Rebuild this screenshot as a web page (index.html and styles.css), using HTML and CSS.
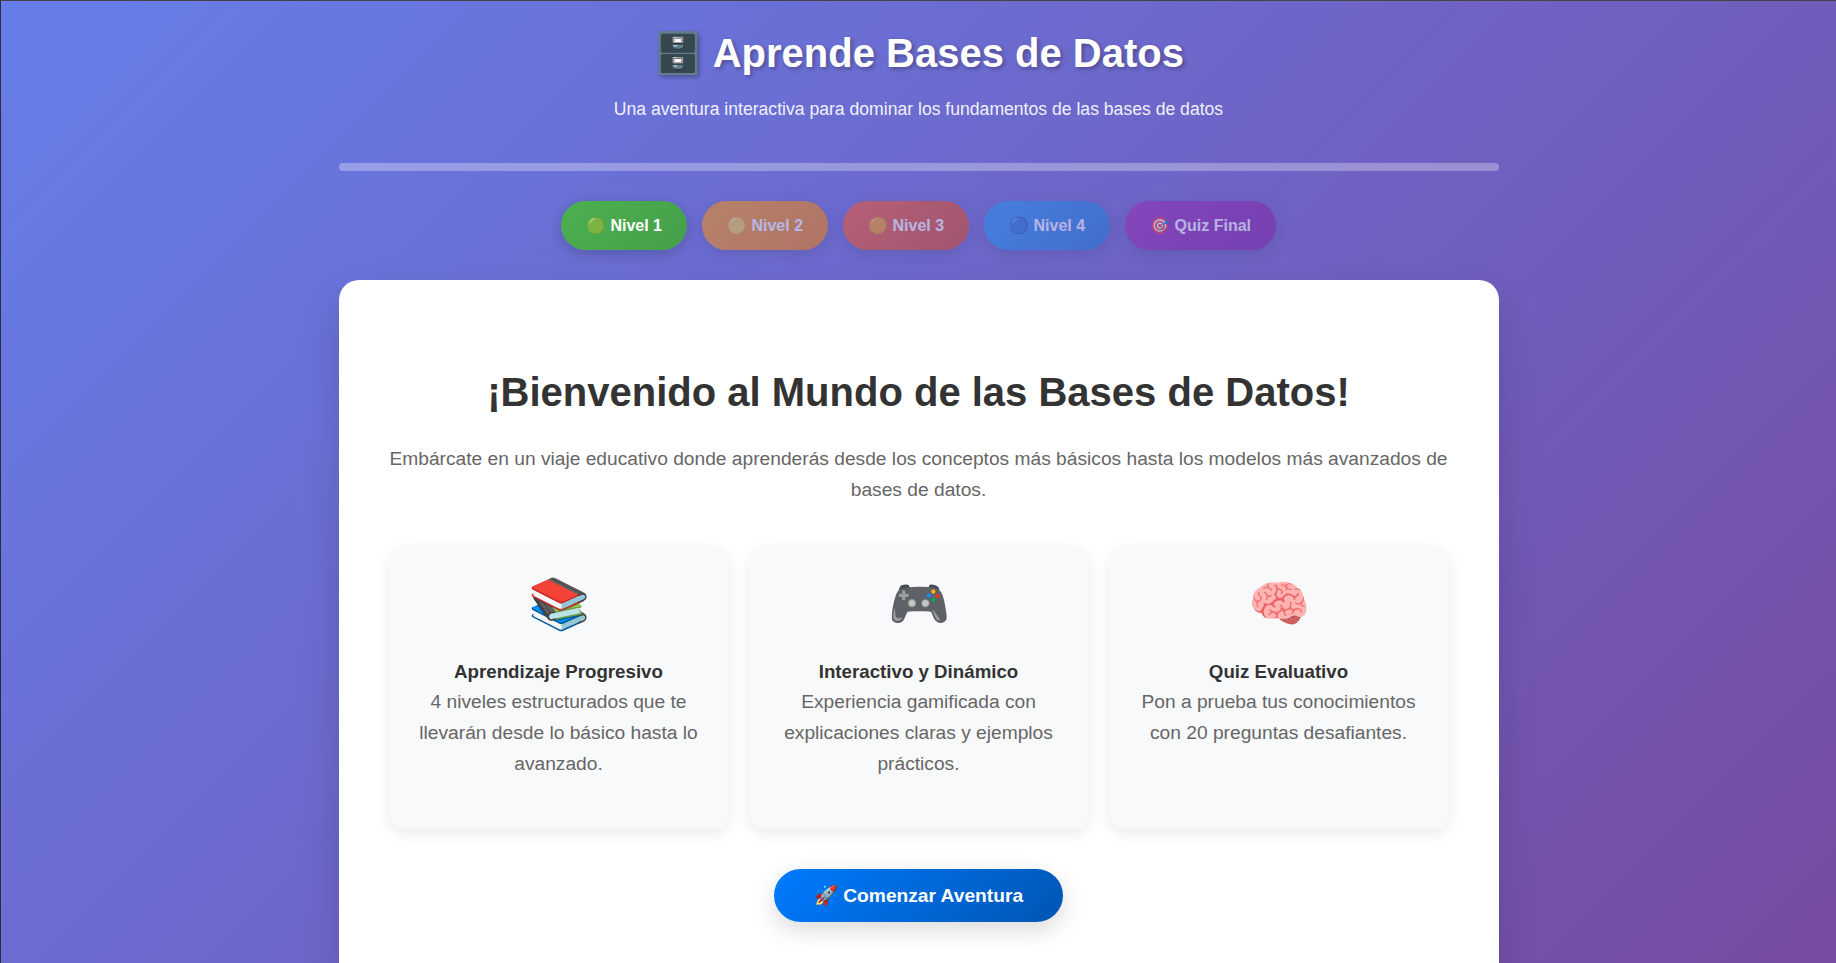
FILE: index.html
```html
<!DOCTYPE html>
<html lang="es">
<head>
<meta charset="utf-8">
<title>Aprende Bases de Datos</title>
<link rel="stylesheet" href="styles.css">
</head>
<body>
<div class="container">
  <header class="header">
    <h1>🗄️ Aprende Bases de Datos</h1>
    <p>Una aventura interactiva para dominar los fundamentos de las bases de datos</p>
  </header>
  <div class="progress"></div>
  <nav class="levels">
    <button class="level level-1 active">🟢 Nivel 1</button>
    <button class="level level-2">🟡 Nivel 2</button>
    <button class="level level-3">🟠 Nivel 3</button>
    <button class="level level-4">🔵 Nivel 4</button>
    <button class="level level-5">🎯 Quiz Final</button>
  </nav>
  <main class="panel">
    <h2>¡Bienvenido al Mundo de las Bases de Datos!</h2>
    <p class="intro">Embárcate en un viaje educativo donde aprenderás desde los conceptos más básicos hasta los modelos más avanzados de bases de datos.</p>
    <section class="features">
      <article class="feature">
        <div class="feature-icon">📚</div>
        <strong>Aprendizaje Progresivo</strong><br>4 niveles estructurados que te llevarán desde lo básico hasta lo avanzado.
      </article>
      <article class="feature">
        <div class="feature-icon">🎮</div>
        <strong>Interactivo y Dinámico</strong><br>Experiencia gamificada con explicaciones claras y ejemplos prácticos.
      </article>
      <article class="feature">
        <div class="feature-icon">🧠</div>
        <strong>Quiz Evaluativo</strong><br>Pon a prueba tus conocimientos con 20 preguntas desafiantes.
      </article>
    </section>
    <div class="cta-row"><button class="cta">🚀 Comenzar Aventura</button></div>
  </main>
</div>
</body>
</html>
```
FILE: styles.css
```css
* { margin: 0; padding: 0; box-sizing: border-box; }
html { height: 100%; }
body {
  font-family: "Liberation Sans", Arial, sans-serif;
  line-height: 1.6;
  color: #333;
  background: linear-gradient(135deg, #667eea 0%, #764ba2 100%);
  border-top: 1px solid #444;
  border-left: 1px solid #2c2c3c;
  overflow: hidden;
  height: 963px;
}
.container { max-width: 1200px; margin: 0 auto; padding: 20px; }
.header { text-align: center; margin-bottom: 40px; color: #fff; }
.header h1 { font-size: 2.5rem; line-height: 1.6; margin-bottom: 10px; text-shadow: 2px 2px 4px rgba(0,0,0,.3); }
.header p { font-size: 1.1rem; opacity: .9; }
.progress { height: 8px; border-radius: 10px; background: rgba(255,255,255,.3); margin-bottom: 30px; }
.levels { display: flex; justify-content: center; gap: 15px; margin-bottom: 30px; }
.level {
  font-family: inherit; font-size: 16px; font-weight: bold; color: #fff;
  border: 0; border-radius: 25px; padding: 15px 25px;
  opacity: .5; box-shadow: 0 4px 15px rgba(0,0,0,.2);
}
.level.active { opacity: 1; }
.level-1 { background: linear-gradient(135deg, #4CAF50, #45a049); }
.level-2 { background: linear-gradient(135deg, #FF9800, #f57c00); }
.level-3 { background: linear-gradient(135deg, #FF5722, #d84315); }
.level-4 { background: linear-gradient(135deg, #2196F3, #1976d2); }
.level-5 { background: linear-gradient(135deg, #9C27B0, #7b1fa2); }
.panel { background: #fff; border-radius: 20px; padding: 80px 50px; box-shadow: 0 20px 40px rgba(0,0,0,.15); }
.panel h2 { font-size: 2.5rem; line-height: 1.6; text-align: center; color: #333; margin-bottom: 20px; }
.intro { font-size: 1.2rem; text-align: center; color: #666; margin-bottom: 40px; }
.features { display: grid; grid-template-columns: repeat(3, 1fr); gap: 20px; margin-bottom: 40px; }
.feature { background: #f8f9fa; border-radius: 15px; padding: 28px 25px 49.4px; text-align: center; font-size: 1.2rem; color: #666; box-shadow: 0 5px 15px rgba(0,0,0,.08); }
.feature strong { color: #333; font-size: 1.17rem; }
.feature-icon { font-size: 50px; line-height: 1.2; margin-bottom: 23px; }
.cta-row { text-align: center; }
.cta { font-family: inherit; font-size: 1.2rem; font-weight: bold; color: #fff; border: 0; border-radius: 30px; padding: 15px 40px; background: linear-gradient(135deg, #007bff, #0056b3); box-shadow: 0 8px 25px rgba(0,0,0,.15); }
```
